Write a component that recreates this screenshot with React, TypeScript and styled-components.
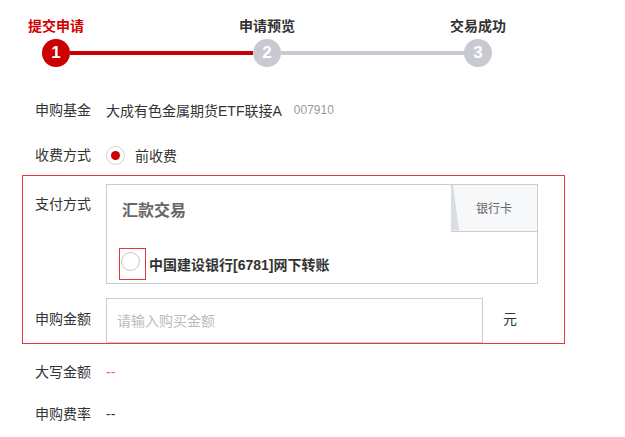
import styled, { createGlobalStyle } from 'styled-components'

const GlobalStyle = createGlobalStyle`
  html, body { margin: 0; padding: 0; background: #fff; }
  body {
    font-family: "Liberation Sans", "Noto Sans CJK SC", sans-serif;
    font-size: 14px;
    color: #333;
  }
`

const Page = styled.div`
  width: 625px;
  height: 437px;
  overflow: hidden;
`

const Steps = styled.div`
  display: flex;
  align-items: flex-end;
  height: 67px;
  padding-left: 42px;
  margin-bottom: 23px;
`

const Step = styled.div`
  width: 28px;
  display: flex;
  flex-direction: column;
  align-items: center;
`

const StepLabel = styled.div<{ $active?: boolean }>`
  margin: 0 -30px 6px;
  white-space: nowrap;
  font-size: 14px;
  line-height: 14px;
  font-weight: bold;
  color: ${(p) => (p.$active ? '#d00000' : '#333')};
`

const StepDot = styled.div<{ $active?: boolean }>`
  width: 28px;
  height: 28px;
  border-radius: 50%;
  background: ${(p) => (p.$active ? '#cc0000' : '#c9c9d1')};
  color: #fff;
  font-weight: bold;
  font-size: 17px;
  display: flex;
  align-items: center;
  justify-content: center;
`

const StepLine = styled.div<{ $active?: boolean }>`
  width: 183px;
  height: 4px;
  margin-bottom: 12px;
  background: ${(p) => (p.$active ? '#cc0000' : '#c9c9d1')};
`

const Form = styled.div`
  padding-left: 22px;
  width: 543px;
`

const Row = styled.div<{ $h?: number; $gap?: number }>`
  display: flex;
  align-items: center;
  height: ${(p) => p.$h ?? 40}px;
  margin-top: ${(p) => p.$gap ?? 0}px;
  padding-left: 13px;
`

const Label = styled.div<{ $lift?: number }>`
  width: 71px;
  flex-shrink: 0;
  font-size: 14px;
  line-height: 14px;
  color: #333;
  margin-bottom: ${(p) => p.$lift ?? 0}px;
`

const Value = styled.span`
  font-size: 14px;
  color: #333;
`

const Code = styled.span`
  font-size: 12px;
  color: #999;
  margin-left: 12px;
`

const Radio = styled.span`
  width: 17px;
  height: 17px;
  border: 1px solid #cfd3d7;
  border-radius: 50%;
  display: flex;
  align-items: center;
  justify-content: center;
  margin-right: 10px;

  &::after {
    content: '';
    width: 9px;
    height: 9px;
    border-radius: 50%;
    background: #cc0000;
  }
`

const Box = styled.div`
  border: 1px solid #e4393c;
  padding-top: 8px;
`

const TopRow = styled.div`
  display: flex;
  align-items: flex-start;
  padding-left: 12px;
`

const TopLabel = styled(Label)`
  padding-top: 13px;
`

const Card = styled.div`
  width: 430px;
  border: 1px solid #c6cfd7;
`

const CardHead = styled.div`
  display: flex;
  align-items: center;
  justify-content: space-between;
  height: 46px;
  padding-left: 15px;
`

const CardTitle = styled.div`
  font-size: 16px;
  font-weight: bold;
  color: #666;
  margin-top: 2px;
`

const Tab = styled.div`
  position: relative;
  width: 86px;
  height: 46px;
  background: #f6f8fa;
  border-bottom: 1px solid #c6cfd7;
  display: flex;
  align-items: center;
  justify-content: center;
  font-size: 12px;
  color: #666;

  &::before {
    content: '';
    position: absolute;
    left: 0;
    top: 0;
    width: 8px;
    height: 46px;
    background: #d9dee2;
    clip-path: polygon(0 0, 2px 0, 100% 100%, 0 100%);
  }
`

const BankRow = styled.div`
  display: flex;
  align-items: center;
  padding: 17px 0 3px 12px;
`

const Check = styled.span`
  width: 24px;
  height: 27px;
  border: 1px solid #e03a3a;
  padding: 3px 0 0 1px;
  box-sizing: content-box;
  margin-right: 3px;

  &::before {
    content: '';
    display: block;
    width: 17px;
    height: 17px;
    border: 1px solid #c2c7cc;
    border-radius: 50%;
  }
`

const BankName = styled.span`
  font-size: 14px;
  font-weight: bold;
  color: #333;
`

const AmountRow = styled.div`
  display: flex;
  align-items: center;
  padding-left: 12px;
  margin-top: 14px;
`

const Input = styled.input`
  width: 377px;
  height: 45px;
  box-sizing: border-box;
  border: 1px solid #c6cfd7;
  padding: 0 10px;
  font-family: inherit;
  font-size: 14px;
  outline: none;
  margin: 0 20px 0 0;
  &::placeholder { color: #bbb; }
`

const Unit = styled.span`
  font-size: 14px;
  line-height: 14px;
  color: #333;
  margin-bottom: 3px;
`

const Dash = styled.span<{ $red?: boolean }>`
  font-size: 14px;
  color: ${(p) => (p.$red ? '#ff5a5a' : '#333')};
`

export default function App() {
  return (
    <Page>
      <GlobalStyle />
      <Steps>
        <Step>
          <StepLabel $active>提交申请</StepLabel>
          <StepDot $active>1</StepDot>
        </Step>
        <StepLine $active />
        <Step>
          <StepLabel>申请预览</StepLabel>
          <StepDot>2</StepDot>
        </Step>
        <StepLine />
        <Step>
          <StepLabel>交易成功</StepLabel>
          <StepDot>3</StepDot>
        </Step>
      </Steps>

      <Form>
        <Row>
          <Label>申购基金</Label>
          <Value>大成有色金属期货ETF联接A</Value>
          <Code>007910</Code>
        </Row>
        <Row $gap={5}>
          <Label>收费方式</Label>
          <Radio />
          <Value>前收费</Value>
        </Row>

        <Box>
          <TopRow>
            <TopLabel>支付方式</TopLabel>
            <Card>
              <CardHead>
                <CardTitle>汇款交易</CardTitle>
                <Tab>银行卡</Tab>
              </CardHead>
              <BankRow>
                <Check />
                <BankName>中国建设银行[6781]网下转账</BankName>
              </BankRow>
            </Card>
          </TopRow>
          <AmountRow>
            <Label $lift={3}>申购金额</Label>
            <Input placeholder="请输入购买金额" />
            <Unit>元</Unit>
          </AmountRow>
        </Box>

        <Row $h={42} $gap={7}>
          <Label>大写金额</Label>
          <Dash $red>--</Dash>
        </Row>
        <Row $h={42}>
          <Label>申购费率</Label>
          <Dash>--</Dash>
        </Row>
      </Form>
    </Page>
  )
}
